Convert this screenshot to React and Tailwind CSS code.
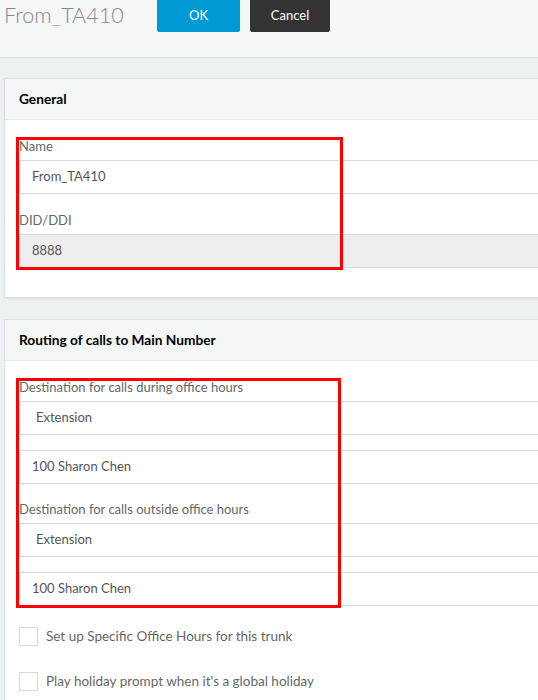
import React from 'react'

const Field = ({ value, disabled, select }) => (
  <div
    className={`h-[34px] border border-[#d5dadc] flex items-center text-[13px] text-[#555] ${
      disabled ? 'bg-[#eeeeee]' : 'bg-white'
    } ${select ? 'pl-[16px]' : 'pl-[12px]'}`}
  >
    {value}
  </div>
)

const Label = ({ children }) => (
  <div className="text-[13px] text-[#666] leading-[16px] mb-[6px]">{children}</div>
)

const Checkbox = ({ label }) => (
  <div className="flex items-center gap-[8px] h-[20px]">
    <div className="w-[19px] h-[19px] border border-[#d5dadc] bg-white" />
    <span className="text-[13.5px] text-[#666]">{label}</span>
  </div>
)

export default function App() {
  return (
    <div className="w-[538px] h-[700px] overflow-hidden bg-[#eef1f2]" style={{ fontFamily: 'Lato, "Open Sans", sans-serif' }}>
      {/* header */}
      <div className="h-[58px] bg-[#f5f6f6] border-b border-[#dde1e3] flex items-start">
        <div className="pl-[4px] pt-[1px] text-[21.5px] font-light text-[#888] w-[157px] leading-[28px]">From_TA410</div>
        <button className="w-[83px] h-[32px] bg-[#0099d3] text-white text-[13px] rounded-b-[2px]">OK</button>
        <button className="ml-[10px] w-[80px] h-[32px] bg-[#333333] text-white text-[13px] rounded-b-[2px]">Cancel</button>
      </div>

      <div className="pt-[20px] pl-[4px]">
        {/* General card */}
        <div className="relative w-[560px] bg-white border border-[#dde1e3] shadow-[0_1px_2px_rgba(0,0,0,0.08)]">
          <div className="h-[41px] bg-[#f5f6f6] border-b border-[#e6e9ea] flex items-center pl-[14px] pt-[1px] text-[13.7px] font-bold text-black">
            General
          </div>
          <div className="pl-[14px] pt-[18px] pb-[29px]">
            <Label>Name</Label>
            <Field value="From_TA410" />
            <div className="h-[18px]" />
            <Label>DID/DDI</Label>
            <Field value="8888" disabled />
          </div>
          <div className="absolute left-[11px] top-[58px] w-[327px] h-[133px] border-[3px] border-[#ff0000]" />
        </div>

        {/* Routing card */}
        <div className="relative mt-[21px] w-[560px] bg-white border border-[#dde1e3]">
          <div className="h-[41px] bg-[#f5f6f6] border-b border-[#e6e9ea] flex items-center pl-[14px] pt-[1px] text-[13.7px] font-bold text-black">
            Routing of calls to Main Number
          </div>
          <div className="pl-[14px] pt-[18px] pb-[20px]">
            <Label>Destination for calls during office hours</Label>
            <Field value="Extension" select />
            <div className="h-[15px]" />
            <Field value="100 Sharon Chen" />
            <div className="h-[17px]" />
            <Label>Destination for calls outside office hours</Label>
            <Field value="Extension" select />
            <div className="h-[15px]" />
            <Field value="100 Sharon Chen" />
            <div className="h-[20px]" />
            <Checkbox label="Set up Specific Office Hours for this trunk" />
            <div className="h-[25px]" />
            <Checkbox label="Play holiday prompt when it's a global holiday" />
          </div>
          <div className="absolute left-[11px] top-[58px] w-[325px] h-[230px] border-[3px] border-[#ff0000]" />
        </div>
      </div>
    </div>
  )
}
